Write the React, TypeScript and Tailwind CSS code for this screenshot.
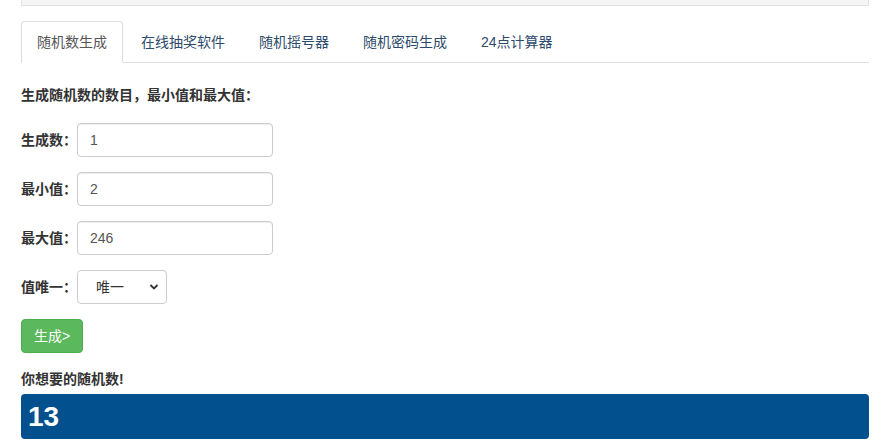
import React from "react";

const font = { fontFamily: '"Liberation Sans", "Noto Sans CJK SC", sans-serif' };

const tabs = ["随机数生成", "在线抽奖软件", "随机摇号器", "随机密码生成", "24点计算器"];

function Field({ label, value }: { label: string; value: string }) {
  return (
    <div className="flex items-center">
      <label className="w-[56px] text-[14px] font-bold text-[#333] leading-5">{label}</label>
      <input
        defaultValue={value}
        className="h-[34px] w-[196px] rounded-[4px] border border-[#ccc] bg-white px-[12px] text-[14px] text-[#555] outline-none shadow-[inset_0_1px_1px_rgba(0,0,0,0.075)]"
      />
    </div>
  );
}

export default function App() {
  return (
    <div className="min-h-[447px] bg-white px-[21px] pr-[13px]" style={font}>
      <div className="h-[6px] border border-t-0 border-[#e3e3e3] bg-[#f5f5f5]" />

      <ul className="mt-[15px] flex border-b border-[#ddd]">
        {tabs.map((t, i) => (
          <li key={t} className="mr-[2px] -mb-px">
            <a
              className={
                i === 0
                  ? "block rounded-t-[4px] border border-[#ddd] border-b-white bg-white px-[15px] py-[10px] text-[14px] leading-5 text-[#555]"
                  : "block rounded-t-[4px] border border-transparent px-[15px] py-[10px] text-[14px] leading-5 text-[#2c4a6b]"
              }
            >
              {t}
            </a>
          </li>
        ))}
      </ul>

      <p className="mt-[22px] text-[14px] font-bold leading-5 text-[#333]">生成随机数的数目，最小值和最大值：</p>

      <div className="mt-[18px] flex flex-col gap-[15px]">
        <Field label="生成数：" value="1" />
        <Field label="最小值：" value="2" />
        <Field label="最大值：" value="246" />
        <div className="flex items-center">
          <label className="w-[56px] text-[14px] font-bold text-[#333] leading-5">值唯一：</label>
          <div className="relative">
            <select className="h-[34px] w-[90px] appearance-none rounded-[4px] border border-[#ccc] bg-white pl-[18px] text-[14px] text-[#333] outline-none">
              <option>唯一</option>
              <option>不唯一</option>
            </select>
            <svg
              className="pointer-events-none absolute right-[8px] top-[13px]"
              width="10"
              height="8"
              viewBox="0 0 10 8"
            >
              <path d="M1.5 2 L5 5.5 L8.5 2" fill="none" stroke="#333" strokeWidth="1.8" />
            </svg>
          </div>
        </div>
        <div>
          <button className="h-[34px] rounded-[4px] border border-[#4cae4c] bg-[#5cb85c] px-[12px] text-[14px] text-white">
            生成&gt;
          </button>
        </div>
      </div>

      <p className="mt-[16px] text-[14px] font-bold leading-5 text-[#333]">你想要的随机数!</p>

      <div className="mt-[5px] flex h-[45px] items-center rounded-[4px] bg-[#02508e] px-[7px]">
        <span className="text-[28px] font-bold leading-none text-white">13</span>
      </div>
    </div>
  );
}
